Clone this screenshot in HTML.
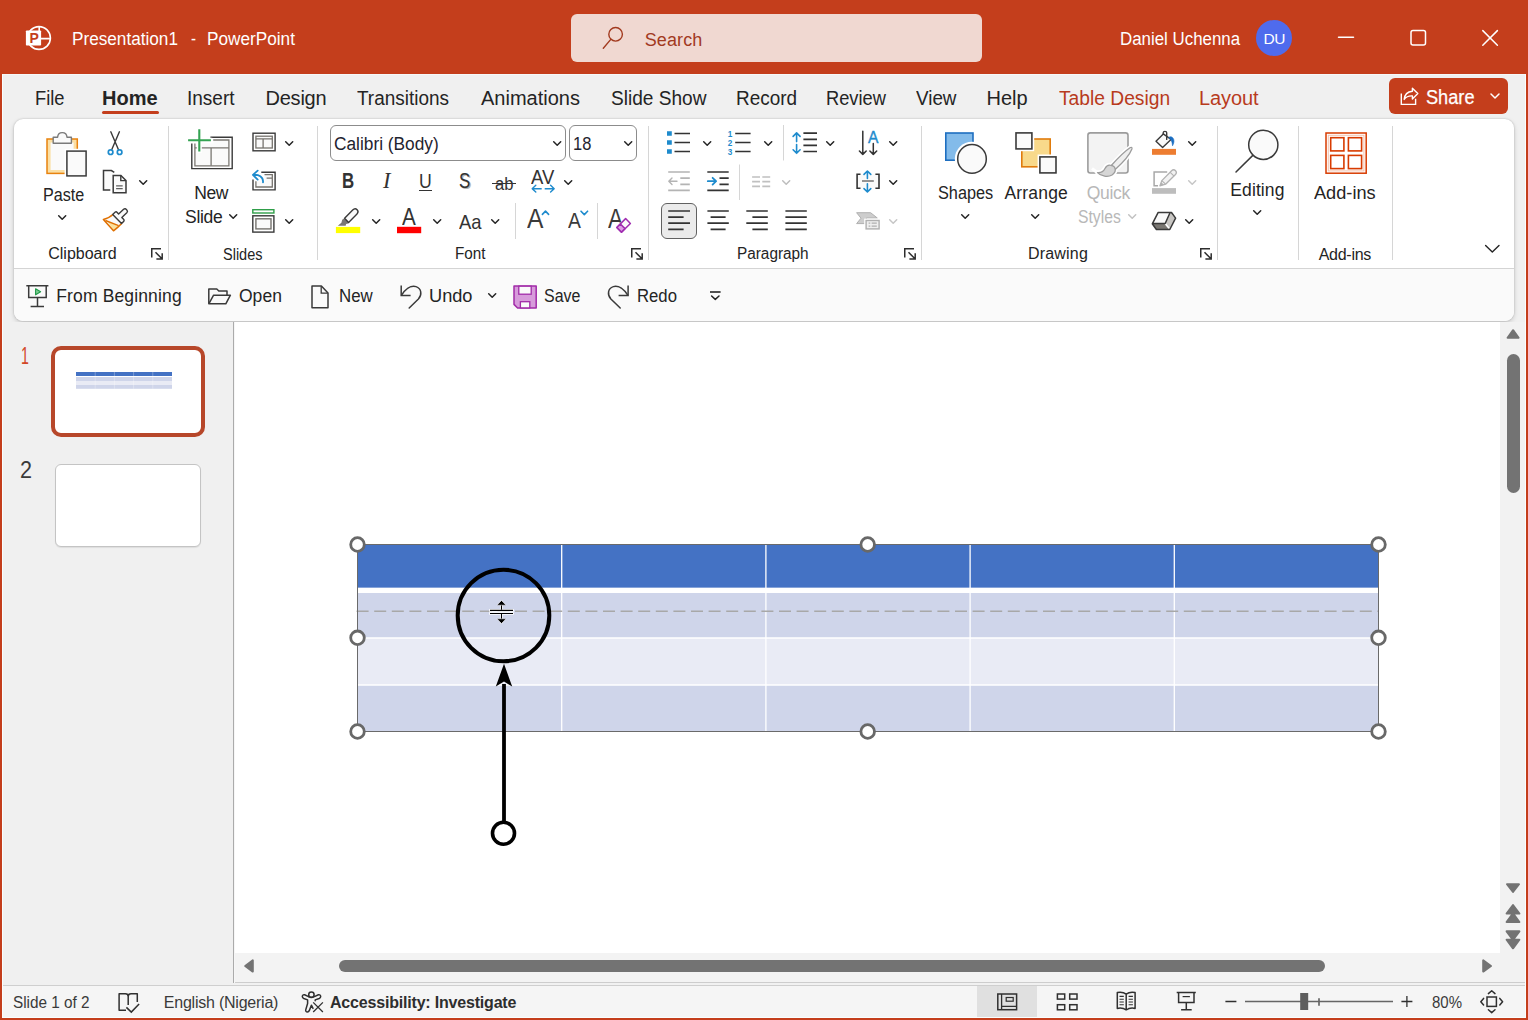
<!DOCTYPE html>
<html lang="en">
<head>
<meta charset="utf-8">
<title>Presentation1 - PowerPoint</title>
<style>
*{box-sizing:border-box;margin:0;padding:0}
html,body{width:1528px;height:1020px;overflow:hidden}
body{position:relative;background:#C43E1C;font-family:"Liberation Sans",sans-serif;color:#242424}
.a{position:absolute}
.t{position:absolute;white-space:nowrap;line-height:1;color:#242424;transform-origin:0 50%}
svg{position:absolute;overflow:visible}
.titlebar{left:0;top:0;width:1528px;height:74px;background:#C43E1C}
.tabrow{left:2px;top:74px;width:1524px;height:250px;background:#F0F0F0}
.ribbon{left:14px;top:119px;width:1500px;height:202px;background:#FFFFFF;border-radius:9px;box-shadow:0 2px 5px rgba(0,0,0,.17),0 0 2px rgba(0,0,0,.2)}
.qat{left:0;top:149px;width:1500px;height:53px;background:#FAFAFA;border-top:1px solid #D4D4D4;border-radius:0 0 9px 9px}
.sep{position:absolute;width:1px;background:#D6D6D6}
.leftpane{left:2px;top:322px;width:233px;height:664px;background:#F0F0F0}
.canvas{left:235px;top:322px;width:1265px;height:631px;background:#FFFFFF}
.status{left:2px;top:985px;width:1524px;height:33px;background:#F5F5F5;border-top:1px solid #CFCFCF}
</style>
</head>
<body>
<div class="a titlebar">
<!-- PowerPoint logo -->
<svg style="left:20px;top:20px" width="36" height="36" viewBox="20 20 36 36">
<circle cx="39" cy="38" r="11.400" fill="none" stroke="#fff" stroke-width="1.600"/>
<path d="M39.200 26.500V38.600H50.300" fill="none" stroke="#fff" stroke-width="1.600"/>
<rect x="25.900" y="30.500" width="15.200" height="15.100" rx="0.800" fill="#fff"/>
<text x="29.600" y="42.700" font-family="Liberation Sans,sans-serif" font-weight="bold" font-size="14" fill="#C43E1C">P</text>
</svg>
<span class="t" style="left:72.05px;top:30.25px;font-size:18px;transform:scaleX(0.9540);color:#fff">Presentation1</span>
<span class="t" style="left:191.00px;top:30.25px;font-size:18px;transform:scaleX(0.8325);color:#fff">-</span>
<span class="t" style="left:207.04px;top:30.25px;font-size:18px;transform:scaleX(0.9554);color:#fff">PowerPoint</span>
<div class="a" style="left:571px;top:14px;width:411px;height:48px;background:#F0D8D1;border-radius:6px"></div>
<svg style="left:600px;top:24px" width="28" height="28" viewBox="0 0 28 28"><circle cx="15.600" cy="10.300" r="6.800" fill="none" stroke="#A23A1F" stroke-width="1.400"/><path d="M10.800 15.400L3.300 24.200" stroke="#A23A1F" stroke-width="1.400" stroke-linecap="round"/></svg>
<span class="t" style="left:644.70px;top:31.25px;font-size:18px;letter-spacing:0.113px;color:#A23A1F">Search</span>
<span class="t" style="left:1120.36px;top:30.25px;font-size:18px;transform:scaleX(0.9377);color:#fff">Daniel Uchenna</span>
<div class="a" style="left:1256px;top:20px;width:36px;height:36px;border-radius:50%;background:#4F6BED"></div>
<span class="t" style="left:1263.40px;top:31.00px;font-size:15.5px;letter-spacing:-0.297px;color:#fff">DU</span>
<svg style="left:1330px;top:20px" width="180" height="36" viewBox="0 0 180 36" fill="none" stroke="#fff" stroke-width="1.5" stroke-linecap="round">
<path d="M8.5 17.3H23.5"/>
<rect x="81" y="10.5" width="14.5" height="14.5" rx="2"/>
<path d="M152.8 10.6L167.4 25.2M167.4 10.6L152.8 25.2"/>
</svg>
</div>
<div class="a tabrow"></div>
<span class="t" style="left:34.58px;top:88.25px;font-size:20px;transform:scaleX(0.9161);">File</span>
<span class="t" style="left:102.00px;top:88.25px;font-size:20px;letter-spacing:0.015px;font-weight:bold">Home</span>
<div class="a" style="left:102px;top:111px;width:57px;height:3px;border-radius:2px;background:#C43E1C"></div>
<span class="t" style="left:186.55px;top:88.25px;font-size:20px;transform:scaleX(0.9500);">Insert</span>
<span class="t" style="left:265.50px;top:88.25px;font-size:20px;letter-spacing:-0.229px;">Design</span>
<span class="t" style="left:357.00px;top:88.25px;font-size:20px;transform:scaleX(0.9477);">Transitions</span>
<span class="t" style="left:481.00px;top:88.25px;font-size:20px;letter-spacing:0.007px;">Animations</span>
<span class="t" style="left:611.00px;top:88.25px;font-size:20px;transform:scaleX(0.9541);">Slide Show</span>
<span class="t" style="left:736.05px;top:88.25px;font-size:20px;transform:scaleX(0.9461);">Record</span>
<span class="t" style="left:825.59px;top:88.25px;font-size:20px;transform:scaleX(0.9135);">Review</span>
<span class="t" style="left:916.00px;top:88.25px;font-size:20px;transform:scaleX(0.9413);">View</span>
<span class="t" style="left:986.60px;top:88.25px;font-size:20px;letter-spacing:-0.073px;">Help</span>
<span class="t" style="left:1059.00px;top:88.25px;font-size:20px;transform:scaleX(0.9607);color:#B83B1D">Table Design</span>
<span class="t" style="left:1199.00px;top:88.25px;font-size:20px;letter-spacing:-0.101px;color:#B83B1D">Layout</span>
<div class="a" style="left:1389px;top:78px;width:119px;height:36px;border-radius:6px;background:#C43E1C"></div>
<svg style="left:1396px;top:84px" width="26" height="24" viewBox="1396 84 26 24" fill="none" stroke="#fff" stroke-width="1.400" stroke-linejoin="round"><path d="M1401.300 93.600V104.400H1415.600V98.800" stroke-linejoin="miter"/><path d="M1412.400 88.200L1417.800 93.500L1412.400 98.900V95.900C1408.500 95.700 1406 96.800 1404.200 99.400C1404.600 94.600 1407.600 91.600 1412.400 91.200Z"/></svg>
<span class="t" style="left:1425.60px;top:87.25px;font-size:20px;transform:scaleX(0.9089);color:#fff;-webkit-text-stroke:.25px #fff">Share</span>
<svg style="left:1489px;top:91px" width="12" height="10" viewBox="0 0 12 10" fill="none" stroke="#fff" stroke-width="1.5" stroke-linecap="round" stroke-linejoin="round"><path d="M2 3l4 4 4-4"/></svg>
<div class="a ribbon"><div class="a qat"></div></div>
<!-- group separators -->
<div class="sep" style="left:168px;top:126px;height:134px"></div>
<div class="sep" style="left:317px;top:126px;height:134px"></div>
<div class="sep" style="left:648px;top:126px;height:134px"></div>
<div class="sep" style="left:921px;top:126px;height:134px"></div>
<div class="sep" style="left:1217px;top:126px;height:134px"></div>
<div class="sep" style="left:1298px;top:126px;height:134px"></div>
<div class="sep" style="left:1392px;top:126px;height:134px"></div>
<!-- Clipboard group -->
<svg style="left:0;top:0" width="330" height="270" viewBox="0 0 330 270" fill="none">
<!-- paste -->
<rect x="47" y="139" width="30.3" height="34.4" fill="#FBDFA3" stroke="#E8820E" stroke-width="1.5"/>
<rect x="50.6" y="142.5" width="23" height="27.5" fill="#FAFAFA"/>
<path d="M53.2 143.2V137.2H57.6C57.8 134.2 59.6 132.6 62.3 132.6C65 132.600 66.800 134.200 67 137.200H71.400V143.200Z" fill="#FAFAFA" stroke="#7A7A7A" stroke-width="1.4" stroke-linejoin="round"/>
<rect x="64.600" y="148.800" width="23.700" height="29.400" fill="#fff"/>
<rect x="66.900" y="151.100" width="19.200" height="24.800" fill="#FAFAFA" stroke="#3A3A3A" stroke-width="1.5"/>
<!-- scissors -->
<path d="M110.800 131.800L118.400 149.600M119.400 131.800L111.800 149.600" stroke="#3A3A3A" stroke-width="1.400" stroke-linecap="round"/>
<circle cx="110.600" cy="152.200" r="2.300" stroke="#1E8BCD" stroke-width="1.700"/>
<circle cx="119.600" cy="152.200" r="2.300" stroke="#1E8BCD" stroke-width="1.700"/>
<!-- copy -->
<path d="M114.300 172.400L111.400 170.500H103.500V190.100H110.300" fill="#FAFAFA" stroke="#3A3A3A" stroke-width="1.500"/>
<path d="M113.200 175.400H120.900L126 180.500V192.800H113.200Z" fill="#FAFAFA" stroke="#3A3A3A" stroke-width="1.500" stroke-linejoin="miter"/>
<path d="M120.800 175.400V180.600H126" stroke="#3A3A3A" stroke-width="1.400"/>
<path d="M116.100 185.800H122.700M116.100 188.600H122.700" stroke="#5E5E5E" stroke-width="1.300"/>
<!-- format painter -->
<path d="M112.800 214.600C110.500 217 107 218.600 103.400 219.400L113.500 230.800C116.500 228.600 119.500 226 121.600 223.600Z" fill="#FAFAFA" stroke="none"/>
<path d="M107.600 222L118.200 226L113.600 230Z" fill="#FBE19B"/>
<path d="M112.800 214.600C110.500 217 107 218.600 103.400 219.400L113.500 230.800C116.500 228.600 119.500 226 121.600 223.600" stroke="#E07000" stroke-width="1.500" stroke-linejoin="round" stroke-linecap="round"/>
<path d="M105.400 220.500L118.600 225.700" stroke="#E07000" stroke-width="1.400"/>
<path d="M112.700 214.400L115 212.300C115.800 211.600 116.600 211.800 117.200 212.400L118.600 213.900L123.600 209.300C124.600 208.400 125.600 208.600 126.300 209.400L127 210.300C127.600 211 127.600 212 126.800 212.800L121.800 217.400L123.600 219.300C124.300 220 124.200 220.800 123.600 221.400L121.500 223.500Z" fill="#FAFAFA" stroke="#3A3A3A" stroke-width="1.400" stroke-linejoin="round"/>
<!-- New slide -->
<path d="M195.500 143.500H213.500V140.600H228.300V165.200H195.500Z" fill="#FAFAFA"/>
<path d="M191.800 143.400V168.600H232.200V137.200H210.400" stroke="#3A3A3A" stroke-width="1.400"/>
<path d="M194.900 143.400V165.800H228.900V140H213.200" stroke="#7A7772" stroke-width="1.300"/>
<path d="M194.900 147.900H228.900M211.100 147.900V165.800" stroke="#7A7772" stroke-width="1.300"/>
<path d="M188.100 140.300H212.300M199.300 129.200V153" stroke="#fff" stroke-width="5"/>
<path d="M188.100 140.300H210.900M199.300 129.200V151.600" stroke="#33A352" stroke-width="2.100"/>
<!-- layout -->
<rect x="253" y="133.200" width="22.100" height="17.600" fill="#fff" stroke="#3A3A3A" stroke-width="1.400"/>
<rect x="255.900" y="136.200" width="16.400" height="11.800" fill="#FAFAFA" stroke="#76736E" stroke-width="1.300"/>
<path d="M255.900 138.900H272.300M263.100 138.900V148" stroke="#76736E" stroke-width="1.300"/>
<!-- reset -->
<path d="M256.400 181.500H264.800V175.300H271.600V186.400H256.400Z" fill="#FAFAFA"/>
<path d="M253 179.600V189.900H275.100V172.200H261.300" stroke="#3A3A3A" stroke-width="1.400"/>
<path d="M255.900 181.200V187H272.300V174.700H264.500M266.600 178.200H272.300" stroke="#76736E" stroke-width="1.300"/>
<path d="M253 174.900C258.500 174.200 263.600 176.600 263 182.400M257.700 170.600L252.900 174.900L257.700 179.600" stroke="#1E8BCD" stroke-width="1.800" stroke-linecap="round" stroke-linejoin="round"/>
<!-- section -->
<rect x="252.800" y="209.700" width="21.100" height="3.300" fill="#fff" stroke="#2F9E49" stroke-width="1.400"/>
<rect x="252.800" y="215.800" width="21.100" height="16.300" fill="#fff" stroke="#3A3A3A" stroke-width="1.400"/>
<rect x="255.900" y="218.800" width="15.100" height="10.100" fill="#FAFAFA" stroke="#76736E" stroke-width="1.400"/>
</svg>
<span class="t" style="left:42.58px;top:186.50px;font-size:17.5px;transform:scaleX(0.9229);">Paste</span>
<svg style="left:57.3px;top:214.2px" width="11" height="7" viewBox="0 0 11 7" fill="none" stroke="#242424" stroke-width="1.5" stroke-linecap="round" stroke-linejoin="round"><path d="M1.7 1.7L5.2 5.2L8.7 1.7"/></svg>
<svg style="left:138px;top:179.2px" width="11" height="7" viewBox="0 0 11 7" fill="none" stroke="#242424" stroke-width="1.5" stroke-linecap="round" stroke-linejoin="round"><path d="M1.7 1.7L5.2 5.2L8.7 1.7"/></svg>
<span class="t" style="left:48.30px;top:245.75px;font-size:16px;letter-spacing:-0.023px;">Clipboard</span>
<svg style="left:150.7px;top:248px" width="13" height="12" viewBox="0 0 13 12" fill="none" stroke="#2E2E2E" stroke-width="1.5"><path d="M0.75 9.5V0.75H10M4.5 4.3L11 10.8M11.2 5.2V11H5.4"/></svg>
<span class="t" style="left:194.20px;top:184.50px;font-size:17.5px;letter-spacing:-0.439px;">New</span>
<span class="t" style="left:185.00px;top:208.50px;font-size:17.5px;letter-spacing:-0.297px;">Slide</span>
<svg style="left:227.5px;top:212.6px" width="11" height="7" viewBox="0 0 11 7" fill="none" stroke="#242424" stroke-width="1.5" stroke-linecap="round" stroke-linejoin="round"><path d="M1.7 1.7L5.2 5.2L8.7 1.7"/></svg>
<svg style="left:284px;top:140.3px" width="11" height="7" viewBox="0 0 11 7" fill="none" stroke="#242424" stroke-width="1.5" stroke-linecap="round" stroke-linejoin="round"><path d="M1.7 1.7L5.2 5.2L8.7 1.7"/></svg>
<svg style="left:284px;top:218.3px" width="11" height="7" viewBox="0 0 11 7" fill="none" stroke="#242424" stroke-width="1.5" stroke-linecap="round" stroke-linejoin="round"><path d="M1.7 1.7L5.2 5.2L8.7 1.7"/></svg>
<span class="t" style="left:222.70px;top:246.75px;font-size:16px;transform:scaleX(0.9064);">Slides</span>
<!-- Font group -->
<div class="a" style="left:330px;top:125px;width:236px;height:36px;border:1px solid #8C8C8C;border-radius:6px;background:#fff"></div>
<div class="a" style="left:569px;top:125px;width:68px;height:36px;border:1px solid #8C8C8C;border-radius:6px;background:#fff"></div>
<span class="t" style="left:333.70px;top:135.25px;font-size:18px;transform:scaleX(0.9608);color:#1f2430">Calibri (Body)</span>
<svg style="left:552.2px;top:140px" width="11" height="7" viewBox="0 0 11 7" fill="none" stroke="#242424" stroke-width="1.5" stroke-linecap="round" stroke-linejoin="round"><path d="M1.7 1.7L5.2 5.2L8.7 1.7"/></svg>
<span class="t" style="left:573.29px;top:135.25px;font-size:18px;transform:scaleX(0.9148);color:#1f2430">18</span>
<svg style="left:623px;top:140px" width="11" height="7" viewBox="0 0 11 7" fill="none" stroke="#242424" stroke-width="1.5" stroke-linecap="round" stroke-linejoin="round"><path d="M1.7 1.7L5.2 5.2L8.7 1.7"/></svg>
<span class="t" style="left:342.11px;top:170.50px;font-size:21.5px;transform:scaleX(0.7855);font-weight:bold;color:#333">B</span>
<span class="t" style="left:383.38px;top:168.75px;font-size:23px;transform:scaleX(0.9788);font-family:'Liberation Serif',serif;font-style:italic;color:#333">I</span>
<span class="t" style="left:418.94px;top:170.50px;font-size:20.5px;transform:scaleX(0.8610);color:#333">U</span>
<div class="a" style="left:418.500px;top:189.500px;width:13.300px;height:1.300px;background:#333"></div>
<span class="t" style="left:458.80px;top:170.50px;font-size:21.5px;transform:scaleX(0.7855);color:#333;text-shadow:1.5px 1.3px 0 #B4B4B4">S</span>
<span class="t" style="left:494.50px;top:174.75px;font-size:18px;transform:scaleX(0.9241);color:#333">ab</span>
<div class="a" style="left:492.200px;top:182.800px;width:23.600px;height:1.400px;background:#333"></div>
<span class="t" style="left:531.20px;top:167.50px;font-size:19.5px;transform:scaleX(0.9482);color:#333">AV</span>
<svg style="left:563.4px;top:179px" width="11" height="7" viewBox="0 0 11 7" fill="none" stroke="#242424" stroke-width="1.5" stroke-linecap="round" stroke-linejoin="round"><path d="M1.7 1.7L5.2 5.2L8.7 1.7"/></svg>
<span class="t" style="left:607.80px;top:204.30px;font-size:28.5px;transform:scaleX(0.7997);color:#3A3A3A">A</span>
<svg style="left:0;top:0" width="660" height="270" viewBox="0 0 660 270" fill="none">
<!-- AV arrows -->
<path d="M532.200 188.700H554.200M535.800 185.300L532.200 188.700L535.800 192.100M550.600 185.300L554.200 188.700L550.600 192.100" stroke="#1E8BCD" stroke-width="1.400" stroke-linecap="round" stroke-linejoin="round"/>
<rect x="541.700" y="186" width="3" height="6" fill="#fff"/>
<!-- highlighter -->
<rect x="335.900" y="226.900" width="24.300" height="6.200" fill="#FFFF00"/>
<path d="M344.300 218.300L348.500 222.600L348.300 223.500L346.100 224L345.700 225.800H337.800L341.400 222.800L342.200 219.700Z" fill="#7A7875"/>
<path d="M344.600 218.300L352.700 210.100C354.200 208.600 356 208.700 357.100 209.800C358.300 211.100 358.200 212.700 357 213.900L348.600 222.400Z" fill="#FAFAFA" stroke="#3A3A3A" stroke-width="1.400" stroke-linejoin="round"/>
<!-- font colour bar -->
<rect x="397" y="226.800" width="24.200" height="6.400" fill="#FF0000"/>
<!-- small separators -->
<path d="M515.500 203V239M597.500 203V239" stroke="#D6D6D6" stroke-width="1"/>
<!-- grow/shrink carets -->
<path d="M542.400 214.400L545.500 211.100L548.600 214.400" stroke="#1E8BCD" stroke-width="1.600" stroke-linecap="round" stroke-linejoin="round"/>
<path d="M581 211.200L584.300 214.600L587.600 211.200" stroke="#1E8BCD" stroke-width="1.600" stroke-linecap="round" stroke-linejoin="round"/>
<!-- eraser -->
<rect x="617.8" y="222.5" width="7" height="8" fill="#fff"/>
<path d="M625.6 218.600L630.400 223.500L621.500 232.300L616.800 227.500Z" fill="#FAFAFA" stroke="#A02CB0" stroke-width="1.500" stroke-linejoin="round"/>
<path d="M620.400 224L625 228.600L621.500 232.100L616.900 227.500Z" fill="#DD9EE5" stroke="#A02CB0" stroke-width="1.500" stroke-linejoin="round"/>
</svg>
<svg style="left:371px;top:218.2px" width="11" height="7" viewBox="0 0 11 7" fill="none" stroke="#242424" stroke-width="1.5" stroke-linecap="round" stroke-linejoin="round"><path d="M1.7 1.7L5.2 5.2L8.7 1.7"/></svg>
<span class="t" style="left:402.30px;top:205.50px;font-size:23.5px;transform:scaleX(0.8805);color:#333">A</span>
<svg style="left:432.1px;top:218.2px" width="11" height="7" viewBox="0 0 11 7" fill="none" stroke="#242424" stroke-width="1.5" stroke-linecap="round" stroke-linejoin="round"><path d="M1.7 1.7L5.2 5.2L8.7 1.7"/></svg>
<span class="t" style="left:459.00px;top:211.25px;font-size:21px;transform:scaleX(0.8766);color:#333">Aa</span>
<svg style="left:490px;top:218.2px" width="11" height="7" viewBox="0 0 11 7" fill="none" stroke="#242424" stroke-width="1.5" stroke-linecap="round" stroke-linejoin="round"><path d="M1.7 1.7L5.2 5.2L8.7 1.7"/></svg>
<span class="t" style="left:526.80px;top:204.30px;font-size:28.5px;transform:scaleX(0.8629);color:#3A3A3A">A</span>
<span class="t" style="left:567.80px;top:209.80px;font-size:22.5px;transform:scaleX(0.8595);color:#3A3A3A">A</span>
<span class="t" style="left:454.85px;top:245.75px;font-size:16px;transform:scaleX(0.9534);">Font</span>
<svg style="left:630.7px;top:248px" width="13" height="12" viewBox="0 0 13 12" fill="none" stroke="#2E2E2E" stroke-width="1.5"><path d="M0.75 9.5V0.75H10M4.5 4.3L11 10.8M11.2 5.2V11H5.4"/></svg>
<!-- Paragraph group -->
<div class="a" style="left:661px;top:203px;width:36px;height:36px;border:1px solid #616161;border-radius:6px;background:#EBEBEB"></div>
<svg style="left:0;top:0" width="930" height="270" viewBox="0 0 930 270" fill="none" stroke-linecap="butt">
<!-- bullets -->
<path d="M667 133.500h4.800M667 142.500h4.800M667 151.500h4.800" stroke="#1E8BCD" stroke-width="4.400"/>
<path d="M674.500 133.500H690M674.500 142.500H690M674.500 151.500H690" stroke="#333" stroke-width="1.700"/>
<!-- numbering -->
<path d="M735.200 133.500H750.600M735.200 142.500H750.600M735.200 151.500H750.600" stroke="#333" stroke-width="1.700"/>
<text x="727.800" y="136.700" font-family="Liberation Sans,sans-serif" font-weight="bold" font-size="8.200" fill="#1E8BCD">1</text>
<text x="727.800" y="145.700" font-family="Liberation Sans,sans-serif" font-weight="bold" font-size="8.200" fill="#1E8BCD">2</text>
<text x="727.800" y="154.900" font-family="Liberation Sans,sans-serif" font-weight="bold" font-size="8.200" fill="#1E8BCD">3</text>
<path d="M783.500 125V160.500M739.500 164.500V200" stroke="#D6D6D6" stroke-width="1"/>
<!-- line spacing -->
<path d="M803.400 133.200H817M803.400 139.300H817M803.400 145.400H817M803.400 151.500H817" stroke="#333" stroke-width="1.700"/>
<path d="M796.600 133V141.600M793.100 136.400L796.600 132.900L800.100 136.400M796.600 144.600V153.200M793.100 149.800L796.600 153.300L800.100 149.800" stroke="#1E8BCD" stroke-width="1.600" stroke-linecap="round" stroke-linejoin="round"/>
<!-- text direction -->
<path d="M862.800 131.200V154.400M859.400 151L862.800 154.400L866.200 151M873.300 143.600V154.400M869.900 151L873.300 154.400L876.700 151" stroke="#333" stroke-width="1.500" stroke-linecap="round" stroke-linejoin="round"/>
<text x="868" y="142.500" font-family="Liberation Sans,sans-serif" font-size="15.600" fill="#1E8BCD" stroke="#1E8BCD" stroke-width=".35">A</text>
<!-- decrease indent (disabled) -->
<path d="M668.200 172H689.800M680.300 178.100H689.800M680.300 184.300H689.800M668.200 190.300H689.800" stroke="#B4B4B4" stroke-width="1.700"/>
<path d="M668.800 181.200H677M672 178L668.800 181.200L672 184.400" stroke="#B4B4B4" stroke-width="1.400" stroke-linecap="round" stroke-linejoin="round"/>
<!-- increase indent -->
<path d="M707.300 172H728.700M719.500 178.100H728.700M719.500 184.300H728.700M707.300 190.300H728.700" stroke="#333" stroke-width="1.700"/>
<path d="M707.800 181.200H716M712.600 177.800L716.100 181.200L712.600 184.600" stroke="#1E8BCD" stroke-width="1.800" stroke-linecap="round" stroke-linejoin="round"/>
<!-- columns (disabled) -->
<path d="M752.100 177H760M762.300 177H770.200M752.100 181.600H760M762.300 181.600H770.200M752.100 186.300H760M762.300 186.300H770.200" stroke="#C0C0C0" stroke-width="1.700"/>
<!-- align text -->
<rect x="857" y="174.300" width="22" height="14" fill="#FAFAFA"/>
<path d="M860.500 174.300H857.100V188.300H860.500M875.400 174.300H879V188.300H875.400" stroke="#333" stroke-width="1.600"/>
<path d="M862 181H873.800" stroke="#666" stroke-width="1.400"/>
<path d="M867.400 171.200V178.400M864 174.400L867.400 171L870.800 174.400M867.400 183.800V191.800M864 188.600L867.400 192L870.800 188.600" stroke="#1E8BCD" stroke-width="1.600" stroke-linecap="round" stroke-linejoin="round"/>
<!-- alignment row -->
<path d="M668.200 211H690M668.200 217.100H683.600M668.200 223.200H690M668.200 229.300H683.600" stroke="#333" stroke-width="1.700"/>
<path d="M707.400 211H728.800M710.600 217.100H725.600M707.400 223.200H728.800M710.600 229.300H725.600" stroke="#333" stroke-width="1.700"/>
<path d="M746.300 211H767.800M752.400 217.100H767.800M746.300 223.200H767.800M752.400 229.300H767.800" stroke="#333" stroke-width="1.700"/>
<path d="M785.400 211H806.800M785.400 217.100H806.800M785.400 223.200H806.800M785.400 229.300H806.800" stroke="#333" stroke-width="1.700"/>
<!-- smartart (disabled) -->
<path d="M856.600 212.700H870.600L877.300 218H866.400V223.600H856.600L861 218.200Z" fill="#CDCDCD" stroke="#B0B0B0" stroke-width="1" stroke-linejoin="round"/>
<rect x="864.200" y="218.600" width="16.600" height="12" fill="#fff" stroke="none"/>
<rect x="866.100" y="220.500" width="13" height="8.400" fill="#EFEFEF" stroke="#B0B0B0" stroke-width="1.400"/>
<path d="M868.600 223.200H870.300M871.600 223.200H876.800M868.600 226.200H870.300M871.600 226.200H876.800" stroke="#B0B0B0" stroke-width="1.300"/>
</svg>
<svg style="left:702px;top:140.3px" width="11" height="7" viewBox="0 0 11 7" fill="none" stroke="#242424" stroke-width="1.5" stroke-linecap="round" stroke-linejoin="round"><path d="M1.7 1.7L5.2 5.2L8.7 1.7"/></svg>
<svg style="left:763.2px;top:140.3px" width="11" height="7" viewBox="0 0 11 7" fill="none" stroke="#242424" stroke-width="1.5" stroke-linecap="round" stroke-linejoin="round"><path d="M1.7 1.7L5.2 5.2L8.7 1.7"/></svg>
<svg style="left:824.9px;top:140.3px" width="11" height="7" viewBox="0 0 11 7" fill="none" stroke="#242424" stroke-width="1.5" stroke-linecap="round" stroke-linejoin="round"><path d="M1.7 1.7L5.2 5.2L8.7 1.7"/></svg>
<svg style="left:888px;top:140.3px" width="11" height="7" viewBox="0 0 11 7" fill="none" stroke="#242424" stroke-width="1.5" stroke-linecap="round" stroke-linejoin="round"><path d="M1.7 1.7L5.2 5.2L8.7 1.7"/></svg>
<svg style="left:780.9px;top:179px" width="11" height="7" viewBox="0 0 11 7" fill="none" stroke="#BDBDBD" stroke-width="1.5" stroke-linecap="round" stroke-linejoin="round"><path d="M1.7 1.7L5.2 5.2L8.7 1.7"/></svg>
<svg style="left:888px;top:179px" width="11" height="7" viewBox="0 0 11 7" fill="none" stroke="#242424" stroke-width="1.5" stroke-linecap="round" stroke-linejoin="round"><path d="M1.7 1.7L5.2 5.2L8.7 1.7"/></svg>
<svg style="left:888px;top:218.3px" width="11" height="7" viewBox="0 0 11 7" fill="none" stroke="#C6C6C6" stroke-width="1.5" stroke-linecap="round" stroke-linejoin="round"><path d="M1.7 1.7L5.2 5.2L8.7 1.7"/></svg>
<span class="t" style="left:736.74px;top:245.75px;font-size:16px;transform:scaleX(0.9585);">Paragraph</span>
<svg style="left:903.8px;top:248px" width="13" height="12" viewBox="0 0 13 12" fill="none" stroke="#2E2E2E" stroke-width="1.5"><path d="M0.75 9.5V0.75H10M4.5 4.3L11 10.8M11.2 5.2V11H5.4"/></svg>
<!-- Drawing / Editing / Add-ins groups -->
<svg style="left:0;top:0" width="1528" height="270" viewBox="0 0 1528 270" fill="none">
<!-- shapes -->
<rect x="945.800" y="133" width="27.200" height="27.200" fill="#83BBEA" stroke="#1E6FC0" stroke-width="1.600"/>
<circle cx="972" cy="158.900" r="17.200" fill="#fff"/>
<circle cx="972" cy="158.900" r="14.300" fill="#FAFAFA" stroke="#3A3A3A" stroke-width="1.500"/>
<!-- arrange -->
<rect x="1021.800" y="139" width="28.400" height="27.800" fill="#F8D98B" stroke="#E07B0C" stroke-width="1.600"/>
<rect x="1013.600" y="130.600" width="20.600" height="20.600" fill="#fff"/>
<rect x="1016" y="132.900" width="15.900" height="16" fill="#FAFAFA" stroke="#3A3A3A" stroke-width="1.600"/>
<rect x="1037.600" y="154.500" width="20.600" height="20.600" fill="#fff"/>
<rect x="1039.900" y="156.900" width="16.100" height="16" fill="#FAFAFA" stroke="#3A3A3A" stroke-width="1.600"/>
<!-- quick styles (disabled) -->
<rect x="1087.900" y="132.900" width="40.100" height="40.100" rx="2.400" fill="#F3F3F3" stroke="#9C9C9C" stroke-width="1.600"/>
<path d="M1111.300 165.500C1118 158 1126 150.500 1130 147.800C1131.500 147 1132.300 147.600 1131.900 149C1129.500 155 1122 163.500 1115.200 169.400Z" fill="#fff" stroke="#fff" stroke-width="4.600" stroke-linejoin="round"/>
<path d="M1111.300 165.500C1108 164.500 1106 166.500 1105 168.500C1103.500 171.500 1101.500 173 1097.500 172.600C1101 176.500 1108 177.500 1112 175C1114.500 173.200 1115.500 171 1115.200 169.400C1115.200 167.400 1113.400 165.600 1111.300 165.500Z" fill="#fff" stroke="#fff" stroke-width="4.600" stroke-linejoin="round"/>
<path d="M1092 168.500L1098.500 173.500" stroke="#fff" stroke-width="3"/>
<path d="M1111.300 165.500C1118 158 1126 150.500 1130 147.800C1131.500 147 1132.300 147.600 1131.900 149C1129.500 155 1122 163.500 1115.200 169.400Z" fill="#EFEFEF" stroke="#9C9C9C" stroke-width="1.300" stroke-linejoin="round"/>
<path d="M1111.300 165.500C1108 164.500 1106 166.500 1105 168.500C1103.500 171.500 1101.500 173 1097.500 172.600C1101 176.500 1108 177.500 1112 175C1114.500 173.200 1115.500 171 1115.200 169.400C1115.200 167.400 1113.400 165.600 1111.300 165.500Z" fill="#D6D6D6" stroke="#9C9C9C" stroke-width="1.300" stroke-linejoin="round"/>
<!-- shape fill -->
<rect x="1152" y="148.900" width="24" height="5.900" fill="#ED7D31"/>
<path d="M1156 141.200L1163.300 133.900L1171 139.400L1162.600 147.500Z" fill="#FAFAFA" stroke="#3A3A3A" stroke-width="1.400" stroke-linejoin="round"/>
<path d="M1163.200 134.400V132.800C1163.200 130.900 1166.700 130.900 1166.700 132.800V139.400" stroke="#3A3A3A" stroke-width="1.400" stroke-linecap="round"/>
<path d="M1168.800 137.400C1170.500 136 1173 136.800 1173.800 139.800C1174.300 142 1173.500 144.200 1172.500 145.800C1172.300 143 1171.800 141 1170.600 139.400Z" fill="#1B6EC2" stroke="#1B6EC2" stroke-width="0.600" stroke-linejoin="round"/>
<!-- shape outline (disabled) -->
<rect x="1152" y="188.100" width="24" height="5.700" fill="#BDBDBD"/>
<path d="M1167.200 171.900H1154.100V185.800H1158" stroke="#A8A8A8" stroke-width="1.500"/>
<path d="M1159.900 185.900L1161.800 180.600L1171.600 170.800C1172.800 169.600 1174.600 169.800 1175.600 170.800C1176.600 171.900 1176.600 173.400 1175.500 174.500L1165.600 184.200Z" fill="#F2F2F2" stroke="#B2B2B2" stroke-width="1.300" stroke-linejoin="round"/>
<path d="M1159.900 185.900L1161.300 182.200L1163.800 184.700Z" fill="#B2B2B2"/>
<path d="M1170.200 172.300L1174.100 176.100M1161.800 180.600L1165.600 184.200" stroke="#B2B2B2" stroke-width="1.100"/>
<!-- shape effects -->
<path d="M1158.200 212.400H1171.500L1175.600 218.100L1169.800 229.500H1156.400L1152.300 223.800Z" fill="#7A7772" stroke="none"/>
<path d="M1170.200 212.600L1175.500 218.100L1169.800 229.300L1165.200 223.600Z" fill="#C8C6C3"/>
<path d="M1165.300 223.800L1169.400 228.800" stroke="#fff" stroke-width="1.600"/>
<path d="M1158.200 212.400H1170L1165.200 223.400H1153Z" fill="#FAFAFA"/>
<path d="M1158.200 212.400H1171.500L1175.600 218.100L1169.800 229.500H1156.400L1152.300 223.800ZM1170.100 212.500L1165.200 223.500H1152.600" stroke="#3A3A3A" stroke-width="1.500" stroke-linejoin="round"/>
<!-- editing -->
<circle cx="1263.300" cy="144.800" r="14.600" fill="#FAFAFA" stroke="#3A3A3A" stroke-width="1.500"/>
<path d="M1252.800 155.400L1236 172" stroke="#3A3A3A" stroke-width="1.500" stroke-linecap="round"/>
<!-- add-ins -->
<rect x="1326" y="133" width="40.200" height="40.200" stroke="#D83B01" stroke-width="1.500"/>
<rect x="1328.300" y="135.300" width="35.600" height="35.600" stroke="#F4C3AE" stroke-width="1"/>
<rect x="1330.700" y="137.700" width="13.200" height="13.200" stroke="#D83B01" stroke-width="1.600"/>
<rect x="1348.400" y="137.700" width="13.200" height="13.200" stroke="#D83B01" stroke-width="1.600"/>
<rect x="1330.700" y="155.400" width="13.200" height="13.200" stroke="#D83B01" stroke-width="1.600"/>
<rect x="1348.400" y="155.400" width="13.200" height="13.200" stroke="#D83B01" stroke-width="1.600"/>
<!-- collapse ribbon chevron -->
<path d="M1485.600 245.400L1492.300 252L1499 245.400" stroke="#242424" stroke-width="1.400" stroke-linecap="round" stroke-linejoin="round"/>
</svg>
<span class="t" style="left:937.80px;top:184.50px;font-size:17.5px;transform:scaleX(0.9294);">Shapes</span>
<svg style="left:960.1px;top:212.6px" width="11" height="7" viewBox="0 0 11 7" fill="none" stroke="#242424" stroke-width="1.5" stroke-linecap="round" stroke-linejoin="round"><path d="M1.7 1.7L5.2 5.2L8.7 1.7"/></svg>
<span class="t" style="left:1004.40px;top:184.50px;font-size:17.5px;letter-spacing:0.195px;">Arrange</span>
<svg style="left:1030.1px;top:212.6px" width="11" height="7" viewBox="0 0 11 7" fill="none" stroke="#242424" stroke-width="1.5" stroke-linecap="round" stroke-linejoin="round"><path d="M1.7 1.7L5.2 5.2L8.7 1.7"/></svg>
<span class="t" style="left:1086.70px;top:184.50px;font-size:17.5px;letter-spacing:-0.321px;color:#B8B8B8">Quick</span>
<span class="t" style="left:1078.00px;top:208.50px;font-size:17.5px;transform:scaleX(0.8976);color:#B8B8B8">Styles</span>
<svg style="left:1127.2px;top:212.6px" width="11" height="7" viewBox="0 0 11 7" fill="none" stroke="#C2C2C2" stroke-width="1.5" stroke-linecap="round" stroke-linejoin="round"><path d="M1.7 1.7L5.2 5.2L8.7 1.7"/></svg>
<svg style="left:1187px;top:140.3px" width="11" height="7" viewBox="0 0 11 7" fill="none" stroke="#242424" stroke-width="1.5" stroke-linecap="round" stroke-linejoin="round"><path d="M1.7 1.7L5.2 5.2L8.7 1.7"/></svg>
<svg style="left:1187px;top:179px" width="11" height="7" viewBox="0 0 11 7" fill="none" stroke="#C6C6C6" stroke-width="1.5" stroke-linecap="round" stroke-linejoin="round"><path d="M1.7 1.7L5.2 5.2L8.7 1.7"/></svg>
<svg style="left:1184.4px;top:218.3px" width="11" height="7" viewBox="0 0 11 7" fill="none" stroke="#242424" stroke-width="1.5" stroke-linecap="round" stroke-linejoin="round"><path d="M1.7 1.7L5.2 5.2L8.7 1.7"/></svg>
<span class="t" style="left:1027.90px;top:245.75px;font-size:16px;letter-spacing:0.218px;">Drawing</span>
<svg style="left:1199.6px;top:248px" width="13" height="12" viewBox="0 0 13 12" fill="none" stroke="#2E2E2E" stroke-width="1.5"><path d="M0.75 9.5V0.75H10M4.5 4.3L11 10.8M11.2 5.2V11H5.4"/></svg>
<span class="t" style="left:1230.30px;top:181.50px;font-size:17.5px;letter-spacing:0.103px;">Editing</span>
<svg style="left:1252.1px;top:209.4px" width="11" height="7" viewBox="0 0 11 7" fill="none" stroke="#242424" stroke-width="1.5" stroke-linecap="round" stroke-linejoin="round"><path d="M1.7 1.7L5.2 5.2L8.7 1.7"/></svg>
<span class="t" style="left:1314.40px;top:184.50px;font-size:17.5px;transform:scaleX(1.0387);">Add-ins</span>
<span class="t" style="left:1318.70px;top:246.75px;font-size:16px;letter-spacing:-0.275px;">Add-ins</span>
<!-- Quick access toolbar -->
<svg style="left:0;top:270px" width="760" height="50" viewBox="0 270 760 50" fill="none">
<!-- from beginning -->
<path d="M26.300 285.800H48.400M28.700 286V297.400H46.200V286M37.500 297.400V306.600M30.600 306.600H44" stroke="#3A3A3A" stroke-width="1.500"/>
<path d="M35.600 288.800L40.600 291.800L35.600 294.800Z" fill="#7DCB92" stroke="#1F9A48" stroke-width="1.100" stroke-linejoin="round"/>
<!-- open -->
<path d="M208.800 303.800V289H216.800L218.800 291H227V295.200" stroke="#3A3A3A" stroke-width="1.500" stroke-linejoin="round"/>
<path d="M208.800 303.800L213.600 295.200H230.400L225.800 303.800Z" stroke="#3A3A3A" stroke-width="1.500" stroke-linejoin="round"/>
<!-- new -->
<path d="M312 286.100H321.400L328 293V307.800H312Z" fill="#FAFAFA" stroke="#3A3A3A" stroke-width="1.500" stroke-linejoin="round"/>
<path d="M321.200 286.300V293.200H327.800" stroke="#3A3A3A" stroke-width="1.300"/>
<!-- undo -->
<path d="M401.200 285.400V295.600H410.600" stroke="#3A3A3A" stroke-width="1.500"/>
<path d="M401.600 295.200C405 289.500 410.500 285 416 286.600C421.500 288.400 422.300 294.800 418.400 299L409.200 308" stroke="#3A3A3A" stroke-width="1.500" stroke-linecap="round"/>
<!-- save -->
<path d="M514 285.900H536.200V308H517.600L514 304.400Z" fill="#D79BDB" stroke="#A12BA8" stroke-width="1.500" stroke-linejoin="round"/>
<rect x="518.800" y="286.200" width="12.400" height="8" fill="#FAFAFA" stroke="#A12BA8" stroke-width="1.300"/>
<rect x="520.400" y="301.700" width="9.400" height="6.200" fill="#FAFAFA" stroke="#A12BA8" stroke-width="1.300"/>
<!-- redo -->
<path d="M628.100 285.400V295.600H618.600" stroke="#3A3A3A" stroke-width="1.500"/>
<path d="M627.700 295.200C624.300 289.500 618.800 285 613.300 286.600C607.800 288.400 607 294.800 610.900 299L620.200 308" stroke="#3A3A3A" stroke-width="1.500" stroke-linecap="round"/>
<!-- customize -->
<path d="M710 292H720.600" stroke="#242424" stroke-width="1.600"/>
<path d="M711.600 296L715.300 299.400L719 296" stroke="#242424" stroke-width="1.500" stroke-linecap="round" stroke-linejoin="round"/>
</svg>
<span class="t" style="left:56.30px;top:287.50px;font-size:17.5px;letter-spacing:0.137px;">From Beginning</span>
<span class="t" style="left:238.90px;top:287.50px;font-size:17.5px;letter-spacing:0.107px;">Open</span>
<span class="t" style="left:338.64px;top:287.50px;font-size:17.5px;transform:scaleX(0.9628);">New</span>
<span class="t" style="left:429.16px;top:287.50px;font-size:17.5px;transform:scaleX(1.0396);">Undo</span>
<svg style="left:487.3px;top:292.3px" width="11" height="7" viewBox="0 0 11 7" fill="none" stroke="#242424" stroke-width="1.5" stroke-linecap="round" stroke-linejoin="round"><path d="M1.7 1.7L5.2 5.2L8.7 1.7"/></svg>
<span class="t" style="left:544.00px;top:287.50px;font-size:17.5px;transform:scaleX(0.9117);">Save</span>
<span class="t" style="left:636.75px;top:287.50px;font-size:17.5px;transform:scaleX(0.9548);">Redo</span>
<!-- left thumbnail pane + canvas -->
<div class="a leftpane"></div>
<div class="a" style="left:233px;top:322px;width:1px;height:661px;background:#ABABAB"></div>
<div class="a" style="left:234px;top:322px;width:1px;height:661px;background:#F6F6F6"></div>
<div class="a canvas"></div>
<span class="t" style="left:21.20px;top:344.50px;font-size:23.5px;transform:scaleX(0.5995);color:#D24726">1</span>
<div class="a" style="left:51px;top:346px;width:154px;height:91px;border:4px solid #B7472A;border-radius:10px;background:#fff"></div>
<svg style="left:75px;top:371px" width="98" height="19" viewBox="75 371 98 19">
<rect x="76" y="372" width="96" height="4" fill="#4472C4"/>
<rect x="76" y="377" width="96" height="4" fill="#CFD5EA"/>
<rect x="76" y="381" width="96" height="4" fill="#E9EBF5"/>
<rect x="76" y="385" width="96" height="3.800" fill="#CFD5EA"/>
<path d="M95.200 372V388.800M114.400 372V388.800M133.600 372V388.800M152.800 372V388.800" stroke="#fff" stroke-opacity=".5" stroke-width=".6"/>
</svg>
<span class="t" style="left:19.98px;top:458.50px;font-size:23.5px;transform:scaleX(0.9175);color:#3A3A3A">2</span>
<div class="a" style="left:55px;top:464px;width:146px;height:83px;border:1px solid #C4C4C4;border-radius:6px;background:#fff;box-shadow:0 1px 1px rgba(0,0,0,.08)"></div>
<!-- slide content -->
<svg style="left:235px;top:322px" width="1265" height="630" viewBox="235 322 1265 630" fill="none">
<rect x="357.500" y="544.500" width="1021" height="43.300" fill="#4472C4"/>
<rect x="357.500" y="587.800" width="1021" height="5.200" fill="#fff"/>
<rect x="357.500" y="593" width="1021" height="44.500" fill="#CFD5EA"/>
<rect x="357.500" y="638.500" width="1021" height="46" fill="#E9EBF5"/>
<rect x="357.500" y="685.500" width="1021" height="46" fill="#CFD5EA"/>
<path d="M357.500 638H1378.500M357.500 685H1378.500" stroke="#fff" stroke-width="1.200"/>
<path d="M561.700 544.500V731.5M765.900 544.500V731.5M970.100 544.500V731.5M1174.300 544.500V731.5" stroke="#fff" stroke-width="1.300"/>
<path d="M356.600 611.200H1378" stroke="#A8A8A8" stroke-width="1.600" stroke-dasharray="12 5.600"/>
<rect x="357.500" y="544.500" width="1021" height="187" stroke="#6A6A6A" stroke-width="1"/>
<g fill="#fff" stroke="#686868" stroke-width="2.800">
<circle cx="357.500" cy="544.500" r="6.800"/><circle cx="867.700" cy="544.500" r="6.800"/><circle cx="1378.500" cy="544.500" r="6.800"/>
<circle cx="357.500" cy="637.800" r="6.800"/><circle cx="1378.500" cy="637.800" r="6.800"/>
<circle cx="357.500" cy="731.500" r="6.800"/><circle cx="867.700" cy="731.500" r="6.800"/><circle cx="1378.500" cy="731.500" r="6.800"/>
</g>
<!-- annotation: circle, arrow -->
<circle cx="503.500" cy="615.500" r="45.800" stroke="#000" stroke-width="4"/>
<path d="M504 684V822" stroke="#000" stroke-width="3.800"/>
<path d="M504 663.800L512.200 686.600L504 681.600L495.800 686.600Z" fill="#000"/>
<circle cx="503.500" cy="833.300" r="11" fill="#fff" stroke="#000" stroke-width="3.600"/>
<!-- row-resize cursor -->
<g stroke="#fff" stroke-width="2.600" stroke-linecap="square"><path d="M490.500 610.400H512.500M490.500 613.500H512.500M501.500 602V609M501.500 615V622"/></g>
<path d="M490 610.400H513M490 613.500H513" stroke="#000" stroke-width="1.100"/>
<path d="M501.500 602V609.800M501.500 614V622" stroke="#000" stroke-width="1.100"/>
<path d="M501.500 600.400L506 605.200H497ZM501.500 623.600L506 618.800H497Z" fill="#000" stroke="#fff" stroke-width=".5"/>
</svg>
<!-- scrollbars -->
<div class="a" style="left:1500px;top:322px;width:26px;height:664px;background:#F2F2F2"></div>
<div class="a" style="left:235px;top:953px;width:1265px;height:30px;background:#F3F3F3"></div>
<div class="a" style="left:235px;top:982px;width:1291px;height:4px;background:#F1F1F1;border-top:1px solid #CDCDCD"></div>
<div class="a" style="left:1507px;top:354px;width:12.500px;height:139px;border-radius:6.500px;background:#737373"></div>
<div class="a" style="left:339px;top:960px;width:986px;height:12px;border-radius:6px;background:#737373"></div>
<svg style="left:0;top:322px" width="1528" height="664" viewBox="0 322 1528 664" fill="#737373" stroke="#737373" stroke-width="2" stroke-linejoin="round">
<path d="M1513.100 330.200L1518.600 337.800H1507.600Z"/>
<path d="M1513 892L1519 884.200H1507Z"/>
<path d="M1513 905L1519.400 913.600H1506.600ZM1513 913.300L1519.400 922H1506.600Z"/>
<path d="M1513 940L1519.400 931.300H1506.600ZM1513 948.300L1519.400 939.700H1506.600Z"/>
<path d="M245.200 966L252.800 960.400V971.600Z"/>
<path d="M1491 966L1483.200 960.400V971.600Z"/>
</svg>
<!-- status bar -->
<div class="a status"></div>
<div class="a" style="left:977px;top:986px;width:60px;height:31px;background:#E0E0E0"></div>
<span class="t" style="left:13.40px;top:994.75px;font-size:16px;transform:scaleX(0.9568);color:#3A3A3A">Slide 1 of 2</span>
<span class="t" style="left:163.80px;top:994.75px;font-size:16px;letter-spacing:-0.227px;color:#3A3A3A">English (Nigeria)</span>
<span class="t" style="left:330.00px;top:994.75px;font-size:16px;letter-spacing:-0.192px;font-weight:bold;color:#2E2E2E">Accessibility: Investigate</span>
<span class="t" style="left:1431.70px;top:994.75px;font-size:16px;transform:scaleX(0.9370);color:#3A3A3A">80%</span>
<svg style="left:0;top:986px" width="1528" height="32" viewBox="0 986 1528 32" fill="none" stroke="#303030" stroke-width="1.500">
<!-- notes/spell book -->
<path d="M126 1010.300H119.100V993.700H125.400C127 993.700 128.200 994.900 128.200 996.400V1005.100M128.200 996.400C128.200 994.900 129.400 993.700 131 993.700H137.300V1002" stroke-linejoin="round"/>
<path d="M126.400 1007.400L131.300 1012.100L139.100 1004" stroke-linejoin="miter"/>
<!-- accessibility -->
<circle cx="311.400" cy="994.800" r="2.700"/>
<path d="M308.600 996.600L304.600 994.800C303.400 994.300 302.300 995.300 302.300 996.600C302.300 997.600 302.900 998.100 303.800 998.500L307.600 999.900V1003.500L305.800 1009.600C305.300 1011.200 306.300 1012 307.400 1012C308.400 1012 309 1011.400 309.400 1010.400L311.400 1005.200L313 1008.400" stroke-linejoin="round" stroke-linecap="round"/>
<path d="M314.400 996.600L318.400 994.800C319.600 994.300 320.700 995.300 320.700 996.600C320.700 997.600 320.100 998.100 319.200 998.500L315.200 999.900V1000.800M308.600 996.600C310.400 997.500 312.600 997.500 314.400 996.600" stroke-linejoin="round" stroke-linecap="round"/>
<path d="M313.200 1002.400L322.900 1012M322.900 1002.400L313.200 1012" stroke-width="1.300"/>
<!-- normal view -->
<rect x="997.800" y="994" width="18.800" height="15.700"/>
<path d="M1001.600 994V1009.700M1001.600 1006.400H1016.600" stroke-width="1.300"/>
<rect x="1006.200" y="997.500" width="7" height="3.700" stroke-width="1.200"/>
<!-- slide sorter -->
<rect x="1057.400" y="994" width="7.300" height="5.100"/><rect x="1069.700" y="994" width="7.300" height="5.100"/>
<rect x="1057.400" y="1004.700" width="7.300" height="5.100"/><rect x="1069.700" y="1004.700" width="7.300" height="5.100"/>
<!-- reading view -->
<path d="M1126.200 994.200V1010M1126.200 994.200C1123.800 992.400 1120.400 992 1117.300 992.600V1008.400C1120.400 1007.800 1123.800 1008.200 1126.200 1010M1126.200 994.200C1128.600 992.400 1132 992 1135.100 992.600V1008.400C1132 1007.800 1128.600 1008.200 1126.200 1010" stroke-linejoin="round"/>
<path d="M1119.500 996.400H1123.800M1119.500 999.200H1123.800M1119.500 1002H1123.800M1119.500 1004.800H1123.800M1128.600 996.400H1132.900M1128.600 999.200H1132.900M1128.600 1002H1132.900M1128.600 1004.800H1132.900" stroke-width="1.100"/>
<!-- slideshow -->
<path d="M1176.700 992.500H1195.800M1178.600 992.700V1002.400H1194V992.700M1186.300 1002.400V1009.800M1181.100 1009.800H1191.700"/>
<path d="M1182.600 996.600H1189.900" stroke-width="1.200"/>
<!-- zoom slider -->
<path d="M1225.400 1001.500H1236.400M1401.400 1001.500H1412.400M1406.900 996V1007" stroke-width="1.300"/>
<path d="M1245 1001.500H1393M1319 998.300V1005.800" stroke="#666" stroke-width="1.700"/>
<rect x="1300.200" y="993" width="8" height="17" fill="#5E5E5E" stroke="none"/>
<!-- fit to window -->
<rect x="1487" y="997" width="9.400" height="9.400"/>
<path d="M1488.400 993.600L1491.700 990.800L1495 993.600M1488.400 1009.800L1491.700 1012.600L1495 1009.800M1483.600 998.400L1480.800 1001.700L1483.600 1005M1499.800 998.400L1502.600 1001.700L1499.800 1005" stroke-linecap="round" stroke-linejoin="round"/>
</svg>
<!-- window border -->
<div class="a" style="left:0;top:74px;width:2px;height:946px;background:#C43E1C"></div>
<div class="a" style="left:1526px;top:74px;width:2px;height:946px;background:#C43E1C"></div>
<div class="a" style="left:0;top:1018px;width:1528px;height:2px;background:#C43E1C"></div>
<div class="a" style="left:2px;top:74px;width:1524px;height:944px;border:1px solid #FAFEFE;border-top-color:#F6F8F8"></div>
</body>
</html>
